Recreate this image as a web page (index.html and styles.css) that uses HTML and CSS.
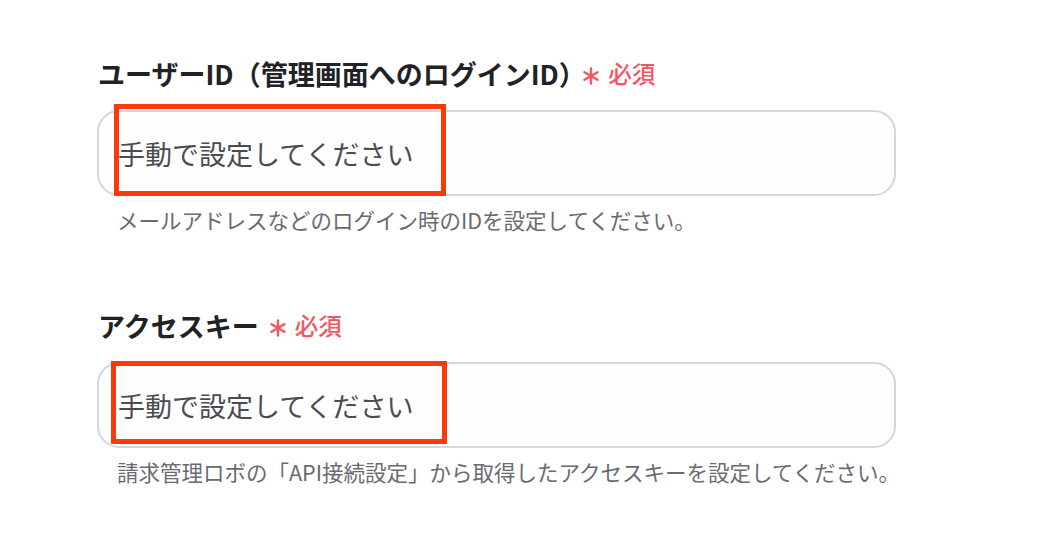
FILE: index.html
```html
<!DOCTYPE html>
<html lang="ja">
<head>
    <meta charset="UTF-8">
    <meta name="viewport" content="width=device-width, initial-scale=1.0">
    <title>アカウント設定</title>
    <link rel="stylesheet" href="styles.css">
</head>
<body>
    <form class="settings-form">
        <!-- ユーザーID -->
        <div class="field">
            <label class="field-label" for="user-id">
                <span>ユーザーID（管理画面へのログインID<span class="paren">）</span></span>
                <span class="required">
                    <svg class="mark" viewBox="0 0 18 18" width="18" height="18">
                        <path d="M9 1.5 V16.5 M2.5 5.2 L15.5 12.8 M15.5 5.2 L2.5 12.8" stroke="currentColor" stroke-width="2.4" stroke-linecap="round"/>
                    </svg>必須
                </span>
            </label>
            <div class="input-wrap">
                <input class="text-input" id="user-id" type="text" placeholder="手動で設定してください">
                <div class="highlight highlight-1"></div>
            </div>
            <p class="help">メールアドレスなどのログイン時のIDを設定してください。</p>
        </div>

        <!-- アクセスキー -->
        <div class="field">
            <label class="field-label" for="access-key">
                <span>アクセスキー</span>
                <span class="required">
                    <svg class="mark" viewBox="0 0 18 18" width="18" height="18">
                        <path d="M9 1.5 V16.5 M2.5 5.2 L15.5 12.8 M15.5 5.2 L2.5 12.8" stroke="currentColor" stroke-width="2.4" stroke-linecap="round"/>
                    </svg>必須
                </span>
            </label>
            <div class="input-wrap">
                <input class="text-input" id="access-key" type="text" placeholder="手動で設定してください">
                <div class="highlight highlight-2"></div>
            </div>
            <p class="help">請求管理ロボの「API接続設定」から取得したアクセスキーを設定してください。</p>
        </div>
    </form>
</body>
</html>
```

FILE: styles.css
```css
body {
    margin: 0;
    background-color: #ffffff;
    font-family: "Noto Sans CJK JP", "Noto Sans", sans-serif;
}

.settings-form {
    width: 799px;
    padding: 57px 0 0 97px;
}

.field {
    margin-bottom: 75px;
}

/* ラベル */
.field-label {
    display: flex;
    align-items: center;
    height: 32px;
    margin: 0 0 21px 1px;
    font-size: 27px;
    font-weight: 700;
    color: #222226;
    white-space: nowrap;
}
.paren {
    font-feature-settings: "halt";
}
.required {
    display: inline-flex;
    align-items: center;
    margin-left: 10px;
    font-size: 23.5px;
    font-weight: 500;
    color: #f4555f;
}
.mark {
    margin-right: 8px;
    transform: translateY(3px);
}

/* 入力欄 */
.input-wrap {
    position: relative;
}
.text-input {
    display: block;
    box-sizing: border-box;
    width: 100%;
    height: 86px;
    padding: 0 0 0 19px;
    border: 2px solid #d2d6df;
    border-radius: 22px;
    background-color: #fefefe;
    font-family: "Noto Sans CJK JP", "Noto Sans", sans-serif;
    font-size: 27px;
    color: #4b4b52;
    outline: none;
}
.text-input::placeholder {
    color: #4b4b52;
}

/* 注釈の赤枠 */
.highlight {
    position: absolute;
    border: 5px solid #fb3a0b;
    box-sizing: border-box;
    pointer-events: none;
}
.highlight-1 {
    left: 17px;
    top: -6px;
    width: 332px;
    height: 92px;
}
.highlight-2 {
    left: 14px;
    top: -1px;
    width: 336px;
    height: 83px;
}

/* 補足テキスト */
.help {
    margin: 10px 0 0 20px;
    font-size: 21.5px;
    line-height: 28px;
    color: #6a6a70;
    white-space: nowrap;
}
```
